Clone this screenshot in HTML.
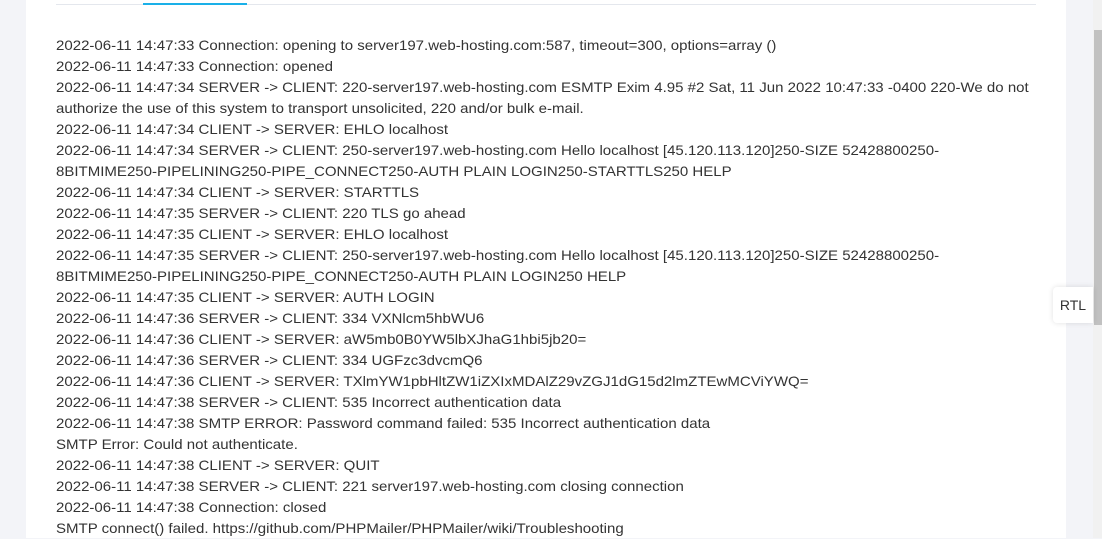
<!DOCTYPE html>
<html><head><meta charset="utf-8"><style>
html,body{margin:0;padding:0;width:1102px;height:538px;overflow:hidden;background:#f3f4f8;}
.panel{position:absolute;left:26px;top:0;width:1040px;height:538px;background:#fff;}
.tabline{position:absolute;left:56px;top:4px;width:980px;height:1px;background:#e4e7ed;}
.tabact{position:absolute;left:143px;top:3px;width:104px;height:2px;background:#1ab0e8;}
.log{position:absolute;left:56px;top:35px;font-family:"Liberation Sans",Arial,sans-serif;font-size:14px;line-height:21px;color:#333;white-space:nowrap;transform:scaleX(1.073);transform-origin:0 0;}
.sb{position:absolute;left:1093px;top:0;width:9px;height:538px;background:#f1f1f1;}
.thumb{position:absolute;left:1094px;top:30px;width:8px;height:295px;background:#c1c1c1;}
.rtl{position:absolute;left:1053px;top:287px;width:40px;height:36px;background:#fff;border-radius:4px 0 0 4px;box-shadow:0 0 6px rgba(0,0,0,.12);font-family:"Liberation Sans",Arial,sans-serif;font-size:14px;color:#333;line-height:36px;text-align:center;}
</style></head><body>
<div class="panel"></div>
<div class="tabline"></div><div class="tabact"></div>
<div class="log">
2022-06-11 14:47:33 Connection: opening to server197.web-hosting.com:587, timeout=300, options=array ()<br>
2022-06-11 14:47:33 Connection: opened<br>
2022-06-11 14:47:34 SERVER -&gt; CLIENT: 220-server197.web-hosting.com ESMTP Exim 4.95 #2 Sat, 11 Jun 2022 10:47:33 -0400 220-We do not<br>
authorize the use of this system to transport unsolicited, 220 and/or bulk e-mail.<br>
2022-06-11 14:47:34 CLIENT -&gt; SERVER: EHLO localhost<br>
2022-06-11 14:47:34 SERVER -&gt; CLIENT: 250-server197.web-hosting.com Hello localhost [45.120.113.120]250-SIZE 52428800250-<br>
8BITMIME250-PIPELINING250-PIPE_CONNECT250-AUTH PLAIN LOGIN250-STARTTLS250 HELP<br>
2022-06-11 14:47:34 CLIENT -&gt; SERVER: STARTTLS<br>
2022-06-11 14:47:35 SERVER -&gt; CLIENT: 220 TLS go ahead<br>
2022-06-11 14:47:35 CLIENT -&gt; SERVER: EHLO localhost<br>
2022-06-11 14:47:35 SERVER -&gt; CLIENT: 250-server197.web-hosting.com Hello localhost [45.120.113.120]250-SIZE 52428800250-<br>
8BITMIME250-PIPELINING250-PIPE_CONNECT250-AUTH PLAIN LOGIN250 HELP<br>
2022-06-11 14:47:35 CLIENT -&gt; SERVER: AUTH LOGIN<br>
2022-06-11 14:47:36 SERVER -&gt; CLIENT: 334 VXNlcm5hbWU6<br>
2022-06-11 14:47:36 CLIENT -&gt; SERVER: aW5mb0B0YW5lbXJhaG1hbi5jb20=<br>
2022-06-11 14:47:36 SERVER -&gt; CLIENT: 334 UGFzc3dvcmQ6<br>
2022-06-11 14:47:36 CLIENT -&gt; SERVER: TXlmYW1pbHltZW1iZXIxMDAlZ29vZGJ1dG15d2lmZTEwMCViYWQ=<br>
2022-06-11 14:47:38 SERVER -&gt; CLIENT: 535 Incorrect authentication data<br>
2022-06-11 14:47:38 SMTP ERROR: Password command failed: 535 Incorrect authentication data<br>
SMTP Error: Could not authenticate.<br>
2022-06-11 14:47:38 CLIENT -&gt; SERVER: QUIT<br>
2022-06-11 14:47:38 SERVER -&gt; CLIENT: 221 server197.web-hosting.com closing connection<br>
2022-06-11 14:47:38 Connection: closed<br>
SMTP connect() failed. https://github.com/PHPMailer/PHPMailer/wiki/Troubleshooting
</div>
<div class="sb"></div><div class="thumb"></div>
<div class="rtl">RTL</div>
</body></html>
